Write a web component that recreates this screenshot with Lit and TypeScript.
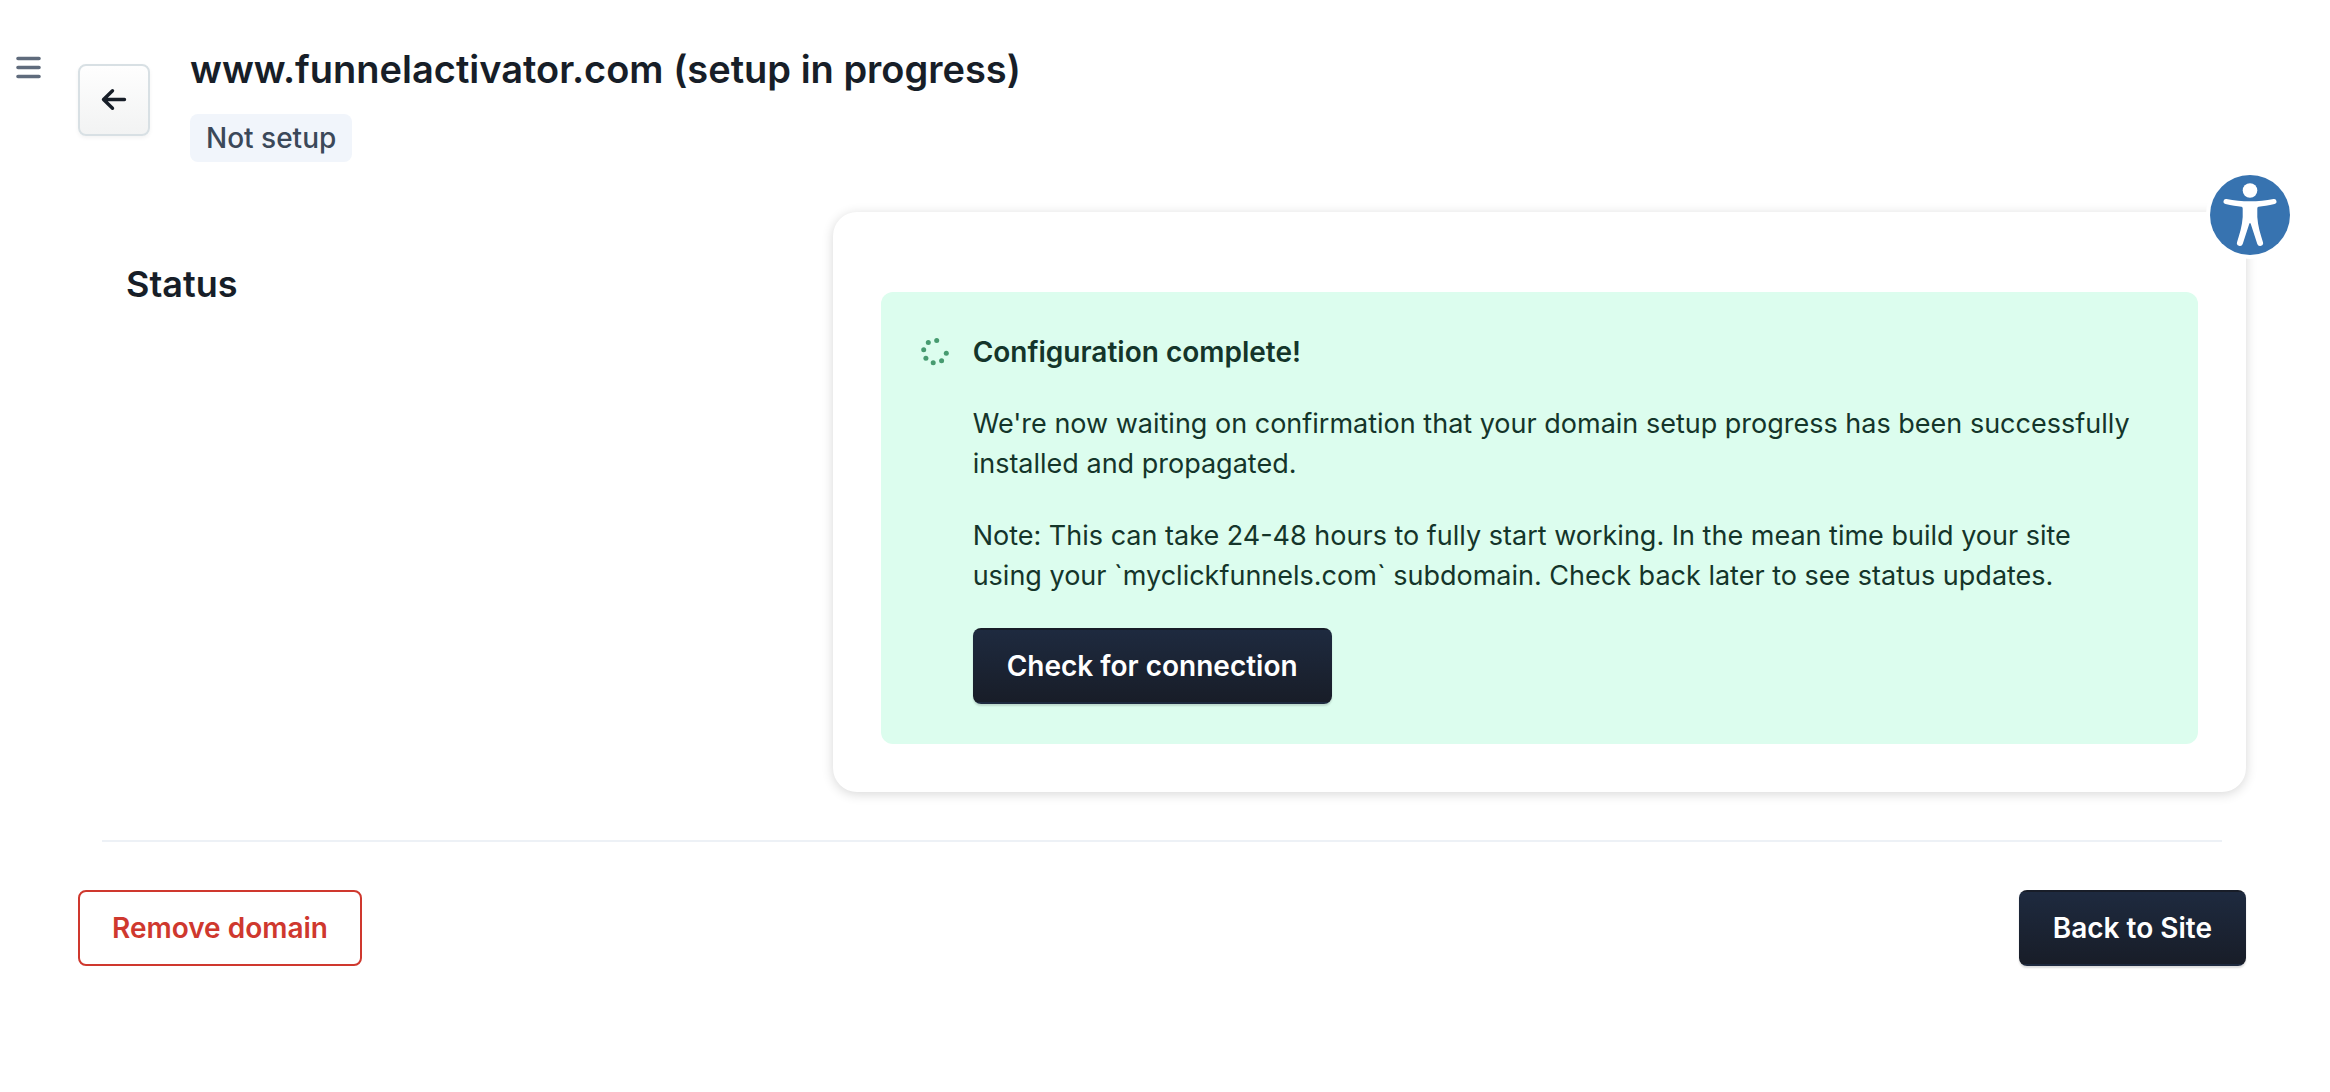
import { LitElement, html, css } from "lit";
import { customElement, property } from "lit/decorators.js";

@customElement("app-root")
export class AppRoot extends LitElement {
  @property() domain = "www.funnelactivator.com";

  static styles = css`
    :host {
      display: block;
      position: relative;
      background: #fff;
      color: #171e28;
      font-family: Inter, "Liberation Sans", sans-serif;
      font-size: 28px;
      line-height: 40px;
    }
    h1, h2, h3, p { margin: 0; }
    svg { display: block; }
    button, a { font: inherit; cursor: pointer; }
    .page {
      display: grid;
      grid-template-columns: 78px minmax(0, 1fr);
      padding: 44px 84px 48px 0;
    }
    .menu {
      justify-self: start;
      align-self: start;
      border: 0;
      background: none;
      color: #5f6b7c;
      padding: 12px 16px;
    }
    .header {
      display: flex;
      align-items: flex-start;
      gap: 40px;
      padding-bottom: 50px;
    }
    .back {
      box-sizing: border-box;
      flex: none;
      display: grid;
      place-items: center;
      width: 72px;
      height: 72px;
      margin-top: 20px;
      border: 2px solid #d8e0e4;
      border-radius: 8px;
      background: linear-gradient(#fefefe, #f2f3f3);
      box-shadow: 0 2px 4px rgba(0, 0, 0, 0.05);
      color: #171e28;
    }
    .heading {
      display: flex;
      flex-direction: column;
      align-items: flex-start;
      gap: 20px;
    }
    .title {
      font-size: 38px;
      line-height: 50px;
      font-weight: 600;
    }
    .badge {
      padding: 4px 16px;
      border-radius: 8px;
      background: #f1f5fb;
      color: #3b4859;
      font-weight: 500;
    }
    .section {
      display: grid;
      grid-template-columns: repeat(3, minmax(0, 1fr));
      gap: 96px;
    }
    .label {
      padding: 52px 48px 0;
      font-size: 36px;
      font-weight: 600;
    }
    .card {
      grid-column: span 2;
      padding: 80px 48px 48px;
      border-radius: 24px;
      background: #fff;
      box-shadow: 0 2px 12px rgba(0, 0, 0, 0.16);
    }
    .alert {
      display: flex;
      gap: 24px;
      padding: 40px 56px 40px 40px;
      border-radius: 12px;
      background: #dcfdee;
      color: #14352a;
    }
    .spinner {
      flex: none;
      margin-top: 6px;
      color: #479b70;
    }
    .message {
      display: flex;
      flex-direction: column;
      align-items: flex-start;
      gap: 32px;
    }
    .message h3 {
      font-size: 28px;
      font-weight: 600;
    }
    .message p { font-size: 27px; }
    .btn {
      box-sizing: border-box;
      padding: 16px 32px;
      border: 2px solid transparent;
      border-radius: 8px;
      font-weight: 600;
      text-decoration: none;
      white-space: nowrap;
    }
    .primary {
      background: linear-gradient(#1e2a3f, #181d28);
      color: #fff;
      box-shadow: 0 2px 2px rgba(0, 0, 0, 0.14);
    }
    .danger {
      background: #fff;
      border-color: #cf382e;
      color: #cf382e;
    }
    .rule {
      margin: 48px 24px;
      border: 0;
      border-top: 2px solid #edf1f6;
    }
    .actions {
      display: flex;
      justify-content: space-between;
    }
    .access {
      position: absolute;
      top: 175px;
      right: 40px;
      width: 80px;
      height: 80px;
      padding: 0;
      border: 0;
      border-radius: 50%;
      background: #3773b0;
      box-shadow: 0 0 0 4px #fff;
    }
  `;

  render() {
    return html`
      <div class="page">
        <button class="menu" aria-label="Open menu">
          <svg width="25" height="24" viewBox="0 0 25 24" fill="none" stroke="currentColor" stroke-width="3.6" stroke-linecap="round">
            <path d="M2 2.500h21M2 11.500h21M2 20.500h21" />
          </svg>
        </button>
        <main>
          <header class="header">
            <button class="back" aria-label="Back">
              <svg width="28" height="28" viewBox="0 0 28 28" fill="none" stroke="currentColor" stroke-width="3.400" stroke-linecap="round" stroke-linejoin="round">
                <path d="M24.500 13.500H3.500M12.500 4.800L3.500 13.500L12.500 22.200" />
              </svg>
            </button>
            <div class="heading">
              <h1 class="title">${this.domain} (setup in progress)</h1>
              <span class="badge">Not setup</span>
            </div>
          </header>
          <section class="section">
            <h2 class="label">Status</h2>
            <div class="card">
              <div class="alert" role="status">
                <svg class="spinner" width="28" height="28" viewBox="0 0 28 28" fill="currentColor" aria-hidden="true">
                  <circle cx="15.700" cy="2.500" r="2.500" />
                  <circle cx="7.300" cy="4.400" r="2.500" />
                  <circle cx="2.700" cy="11.700" r="2.500" />
                  <circle cx="4.900" cy="20.200" r="2.500" />
                  <circle cx="12.200" cy="24.800" r="2.500" />
                  <circle cx="20.600" cy="22.700" r="2.500" />
                  <circle cx="25.300" cy="15.200" r="2.500" />
                </svg>
                <div class="message">
                  <h3>Configuration complete!</h3>
                  <p>We're now waiting on confirmation that your domain setup progress has been successfully installed and propagated.</p>
                  <p>Note: This can take 24-48 hours to fully start working. In the mean time build your site using your \`myclickfunnels.com\` subdomain. Check back later to see status updates.</p>
                  <button class="btn primary">Check for connection</button>
                </div>
              </div>
            </div>
          </section>
          <hr class="rule" />
          <div class="actions">
            <button class="btn danger">Remove domain</button>
            <a class="btn primary" href="#site">Back to Site</a>
          </div>
        </main>
      </div>
      <button class="access" aria-label="Accessibility options">
        <svg width="80" height="80" viewBox="0 0 80 80" fill="#fff">
          <circle cx="40" cy="15.500" r="7.300" />
          <path d="M16.500 24C24 25.500 32 26.300 40 26.300S56 25.500 63.500 24a2.500 2.500 0 0 1 1 4.900C58.500 30.200 53 31 48.500 31.700Q47.300 32 47.300 33.500V42C47.800 51 50.500 59 52.900 67a2.900 2.900 0 0 1-5.600 2L40.800 49Q40 47 39.200 49L32.700 69a2.900 2.900 0 0 1-5.600-2C29.500 59 32.200 51 32.700 42V33.500Q32.700 32 31.500 31.700C27 31 21.500 30.200 15.500 28.900a2.500 2.500 0 0 1 1-4.900z" />
        </svg>
      </button>
    `;
  }
}
